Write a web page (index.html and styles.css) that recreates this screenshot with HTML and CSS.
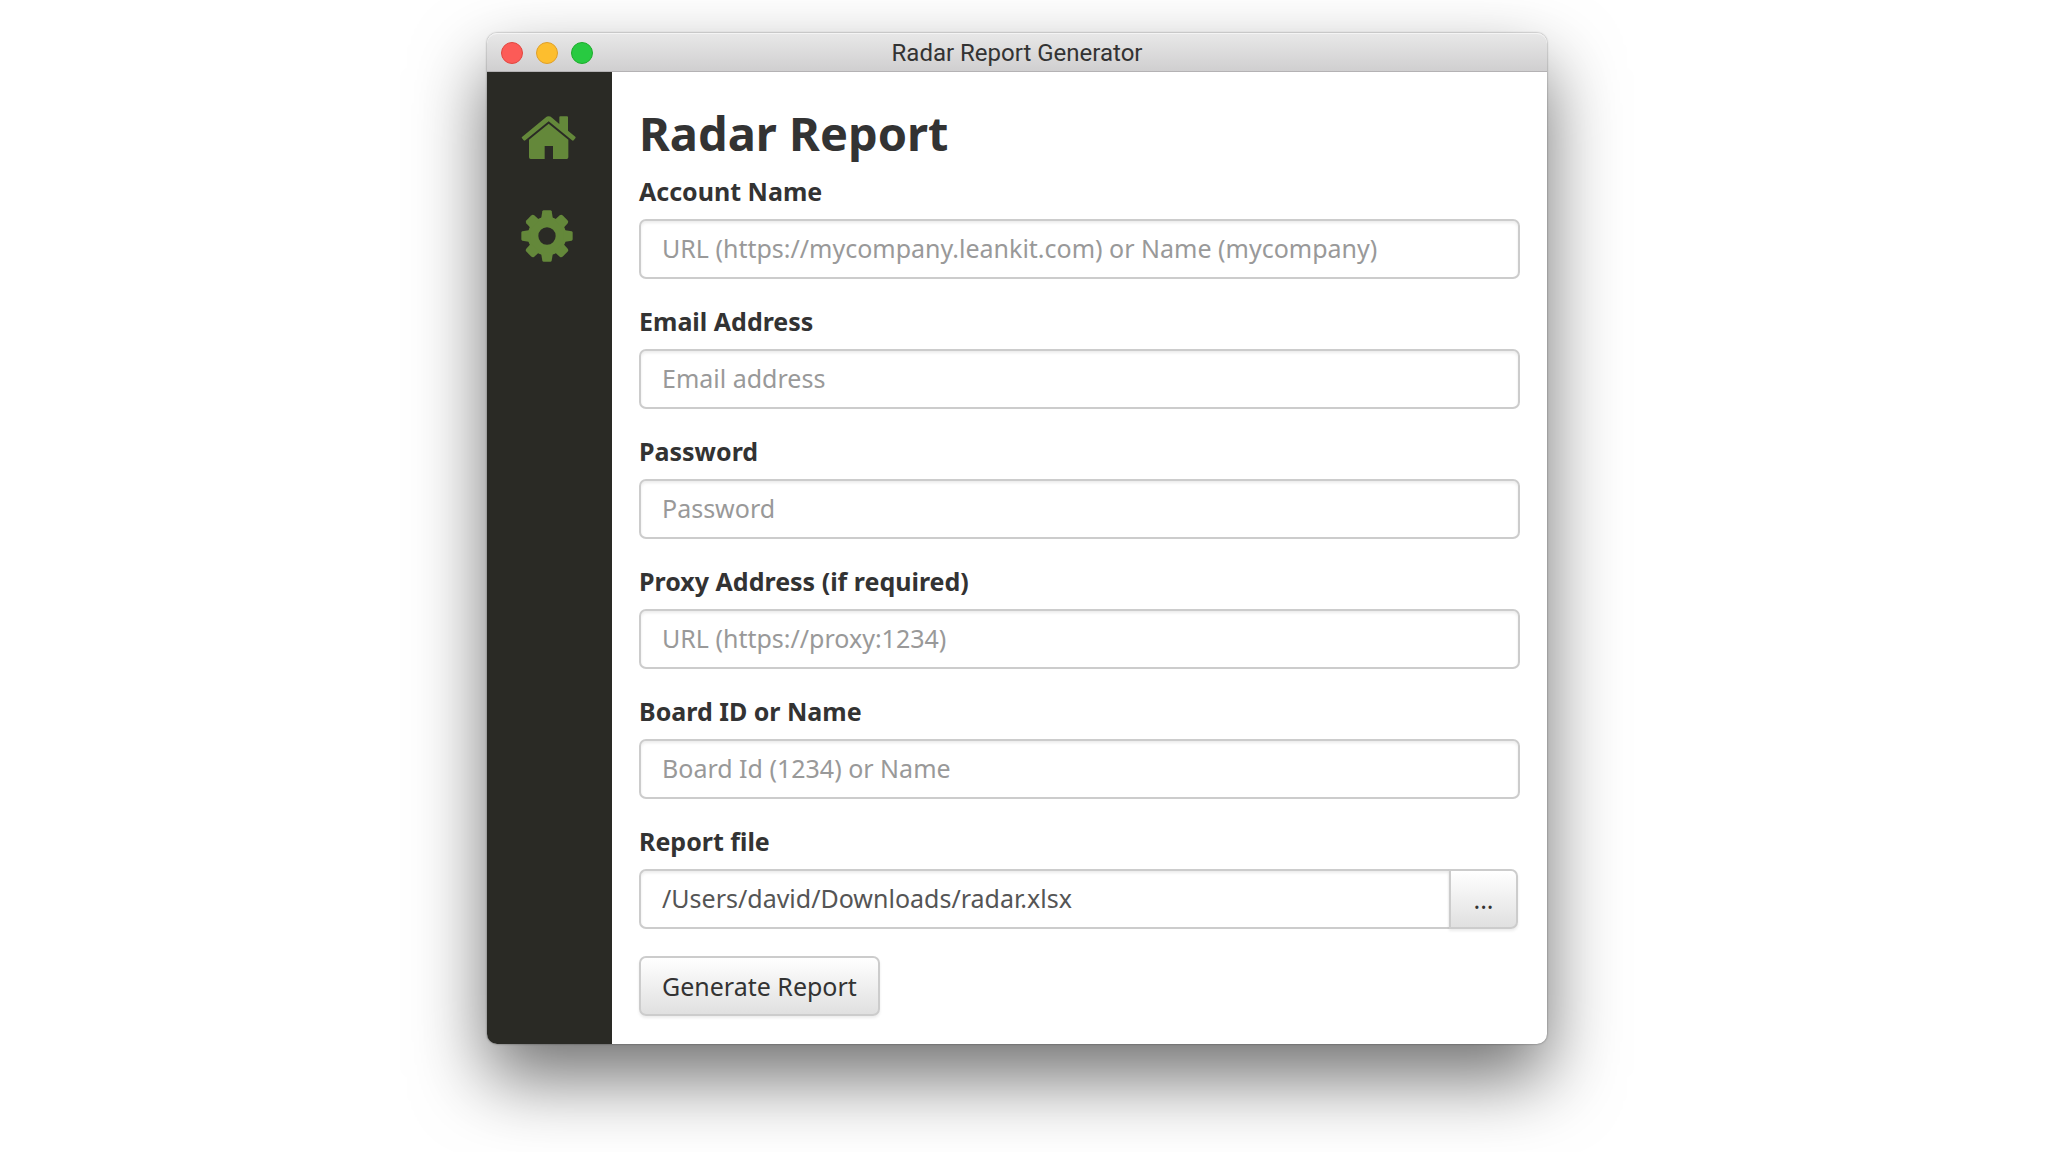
FILE: index.html
```html
<!DOCTYPE html>
<html lang="en">
<head>
<meta charset="utf-8">
<meta name="viewport" content="width=device-width, initial-scale=1">
<title>Radar Report Generator</title>
<link rel="stylesheet" href="styles.css">
</head>
<body>
<div class="window">
  <header class="titlebar">
    <div class="lights">
      <button class="light close" type="button" aria-label="Close"></button>
      <button class="light minimize" type="button" aria-label="Minimize"></button>
      <button class="light maximize" type="button" aria-label="Maximize"></button>
    </div>
    <span class="title">Radar Report Generator</span>
  </header>
  <div class="body">
    <nav class="sidebar">
      <a href="#home" aria-label="Home">
        <svg class="icon" viewBox="150 269 168 168" aria-hidden="true">
          <path d="M156 350 L226 292 Q236 284 246 292 L268 311 V290 Q268 288 271 288 H291 Q294 288 294 291 V331 L316 349 Q318 351 316 354 L311 360 Q309 362 306 360 L236 303 L166 360 Q163 362 161 360 L156 354 Q154 352 156 350 Z"/>
          <path d="M236 310 L295 358 V411 Q295 416 290 416 H249 V377 H224 V416 H182 Q177 416 177 411 V358 Z"/>
        </svg>
      </a>
      <a href="#settings" aria-label="Settings">
        <svg class="icon" viewBox="-81 -84 168 168" aria-hidden="true">
          <defs>
            <path id="tooth" d="M-18 -50 L-14 -74 Q-13 -77 -10 -77 H10 Q13 -77 14 -74 L18 -50 Z"/>
            <path id="wide-tooth" d="M-18 -50 L-17 -71 Q-16 -77 -10 -77 H10 Q16 -77 17 -71 L18 -50 Z"/>
          </defs>
          <circle class="ring" r="42"/>
          <use href="#tooth"/>
          <use href="#wide-tooth" transform="rotate(45)"/>
          <use href="#tooth" transform="rotate(90)"/>
          <use href="#wide-tooth" transform="rotate(135)"/>
          <use href="#tooth" transform="rotate(180)"/>
          <use href="#wide-tooth" transform="rotate(225)"/>
          <use href="#tooth" transform="rotate(270)"/>
          <use href="#wide-tooth" transform="rotate(315)"/>
        </svg>
      </a>
    </nav>
    <main class="content">
      <h1>Radar Report</h1>
      <form>
        <div class="field">
          <label for="account">Account Name</label>
          <input id="account" type="text" placeholder="URL (https://mycompany.leankit.com) or Name (mycompany)">
        </div>
        <div class="field">
          <label for="email">Email Address</label>
          <input id="email" type="email" placeholder="Email address">
        </div>
        <div class="field">
          <label for="password">Password</label>
          <input id="password" type="password" placeholder="Password">
        </div>
        <div class="field">
          <label for="proxy">Proxy Address (if required)</label>
          <input id="proxy" type="text" placeholder="URL (https://proxy:1234)">
        </div>
        <div class="field">
          <label for="board">Board ID or Name</label>
          <input id="board" type="text" placeholder="Board Id (1234) or Name">
        </div>
        <div class="field">
          <label for="file">Report file</label>
          <div class="group">
            <input id="file" type="text" value="/Users/david/Downloads/radar.xlsx">
            <button class="btn browse" type="button">...</button>
          </div>
        </div>
        <div class="actions">
          <button class="btn" type="submit">Generate Report</button>
        </div>
      </form>
    </main>
  </div>
</div>
</body>
</html>
```
FILE: styles.css
```css
* {
  box-sizing: border-box;
}

body {
  margin: 0;
  padding: 33px 14px 108px 0;
  display: flex;
  justify-content: center;
  background: #fff;
  color: #333;
  font-family: "Noto Sans", sans-serif;
  font-size: 25px;
}

.window {
  width: 100%;
  max-width: 1060px;
  border-radius: 10px;
  background: #fff;
  box-shadow: 0 0 2px rgba(0, 0, 0, .5), 0 34px 72px rgba(0, 0, 0, .56);
}

.titlebar {
  height: 39px;
  display: grid;
  grid-template-columns: 1fr auto 1fr;
  align-items: center;
  padding: 2px 14px 0;
  border-bottom: 1px solid #b4b2b4;
  border-radius: 10px 10px 0 0;
  background: linear-gradient(#e8e8e8, #d0cfd0);
  box-shadow: inset 0 1px #f4f4f4;
}

.lights {
  display: flex;
  gap: 13px;
}

.light {
  width: 22px;
  height: 22px;
  padding: 0;
  border: 1px solid;
  border-radius: 50%;
}

.close {
  background: #fc5b57;
  border-color: #e2463f;
}

.minimize {
  background: #fdbe2e;
  border-color: #e0a028;
}

.maximize {
  background: #28ca41;
  border-color: #1dad2b;
}

.title {
  font-family: Roboto, sans-serif;
  font-size: 24px;
  line-height: 36px;
}

.body {
  display: flex;
}

.sidebar {
  flex: 0 0 125px;
  display: flex;
  flex-direction: column;
  align-items: center;
  gap: 42px;
  padding: 38px 4px 0 0;
  border-radius: 0 0 0 10px;
  background: #2a2a25;
}

.sidebar a {
  display: flex;
}

.icon {
  width: 56px;
  height: 56px;
  fill: #64883a;
}

.ring {
  fill: none;
  stroke: #64883a;
  stroke-width: 32;
}

.content {
  flex: 1;
  min-width: 0;
  padding: 28px 27px;
}

h1 {
  margin: 0 0 8px;
  font-size: 47px;
  line-height: 66px;
}

.field {
  display: flex;
  flex-direction: column;
  gap: 11px;
  margin-bottom: 25px;
}

label {
  font-weight: 700;
  line-height: 34px;
}

input {
  width: 100%;
  height: 60px;
  padding: 0 21px 2px;
  border: 2px solid #ccc;
  border-radius: 7px;
  background: #fff;
  box-shadow: inset 0 2px 3px rgba(0, 0, 0, .08);
  color: #555;
  font: inherit;
}

input::placeholder {
  color: #999;
  opacity: 1;
}

.group {
  display: flex;
  padding-right: 2px;
}

.group input {
  flex: 1;
  min-width: 0;
  border-right: 0;
  border-radius: 7px 0 0 7px;
}

.actions {
  display: flex;
  padding-top: 2px;
}

.btn {
  height: 60px;
  padding: 0 21px 1px;
  border: 2px solid #ccc;
  border-radius: 7px;
  background: linear-gradient(#fff, #e0e0e0);
  box-shadow: 0 2px 3px rgba(0, 0, 0, .08);
  color: #333;
  font: inherit;
}

.browse {
  width: 69px;
  border-radius: 0 7px 7px 0;
}
```
